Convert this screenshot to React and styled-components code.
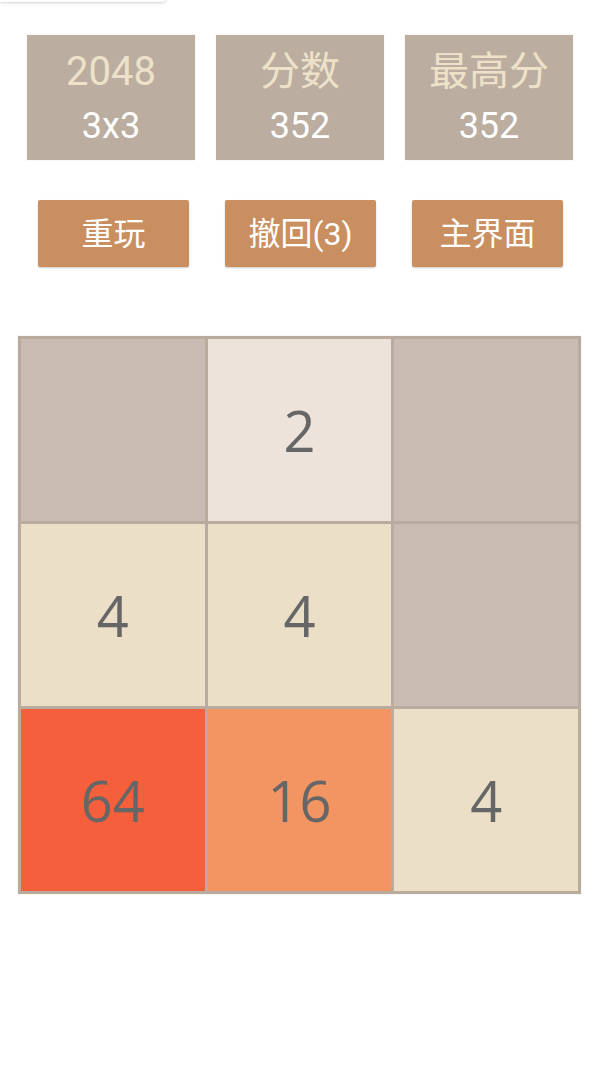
import styled, { createGlobalStyle } from 'styled-components';

const GlobalStyle = createGlobalStyle`
  body {
    margin: 0;
    background: #ffffff;
    font-family: 'Roboto', 'Noto Sans CJK SC', sans-serif;
  }
`;

const Page = styled.div`
  position: relative;
  width: 600px;
  min-height: 1066px;
  background: #fff;
  overflow: hidden;
`;

const ToastEdge = styled.div`
  position: absolute;
  top: -4px;
  left: 0;
  width: 166px;
  height: 6px;
  background: #fff;
  border-radius: 0 0 4px 0;
  box-shadow: 0 1px 3px rgba(0, 0, 0, 0.18);
`;

const ScoreRow = styled.div`
  display: flex;
  gap: 21px;
  padding: 35px 0 0 27px;
`;

const ScoreBox = styled.div`
  width: 168px;
  height: 125px;
  background: #bbad9f;
  display: flex;
  flex-direction: column;
  align-items: center;
  justify-content: center;
  gap: 11px;
  box-shadow: 0 0 1px rgba(0, 0, 0, 0.15);
`;

const ScoreLabel = styled.div`
  color: #ede2c9;
  font-size: 40px;
  line-height: 46px;
  font-family: 'Roboto', 'Noto Sans CJK SC', sans-serif;
`;

const ScoreValue = styled.div`
  color: #ffffff;
  font-size: 36px;
  line-height: 40px;
  font-family: 'Roboto', 'Noto Sans CJK SC', sans-serif;
`;

const ButtonRow = styled.div`
  display: flex;
  gap: 36px;
  padding: 40px 0 0 38px;
`;

const ActionButton = styled.button`
  width: 151px;
  height: 67px;
  border: none;
  border-radius: 2px;
  background: #c98f61;
  color: #fff;
  font-size: 32px;
  font-family: 'Roboto', 'Noto Sans CJK SC', sans-serif;
  padding: 0 0 5px;
  box-shadow: 0 1px 2px rgba(0, 0, 0, 0.2);
  display: flex;
  align-items: center;
  justify-content: center;
`;

const Board = styled.div`
  margin: 69px 0 0 18px;
  width: 563px;
  box-sizing: border-box;
  padding: 3px;
  background: #b9ab9d;
  display: grid;
  grid-template-columns: repeat(3, 1fr);
  grid-template-rows: repeat(3, 182px);
  gap: 3px;
  box-shadow: 0 0 1px rgba(0, 0, 0, 0.2);
`;

const tileColors = {
  0: '#c9bcb2',
  2: '#ede3da',
  4: '#ebdfc8',
  16: '#f39563',
  64: '#f55f3b',
};

const Tile = styled.div`
  background: ${p => tileColors[p.$value] || '#c9bcb2'};
  display: flex;
  align-items: center;
  justify-content: center;
  color: #666666;
  font-size: 56px;
  font-family: 'Open Sans', 'Roboto', sans-serif;
`;

const cells = [0, 2, 0, 4, 4, 0, 64, 16, 4];

export default function App() {
  return (
    <Page>
      <GlobalStyle />
      <ToastEdge />
      <ScoreRow>
        <ScoreBox>
          <ScoreLabel>2048</ScoreLabel>
          <ScoreValue>3x3</ScoreValue>
        </ScoreBox>
        <ScoreBox>
          <ScoreLabel>分数</ScoreLabel>
          <ScoreValue>352</ScoreValue>
        </ScoreBox>
        <ScoreBox>
          <ScoreLabel>最高分</ScoreLabel>
          <ScoreValue>352</ScoreValue>
        </ScoreBox>
      </ScoreRow>
      <ButtonRow>
        <ActionButton>重玩</ActionButton>
        <ActionButton>撤回(3)</ActionButton>
        <ActionButton>主界面</ActionButton>
      </ButtonRow>
      <Board>
        {cells.map((v, i) => (
          <Tile key={i} $value={v}>
            {v ? v : ''}
          </Tile>
        ))}
      </Board>
    </Page>
  );
}
